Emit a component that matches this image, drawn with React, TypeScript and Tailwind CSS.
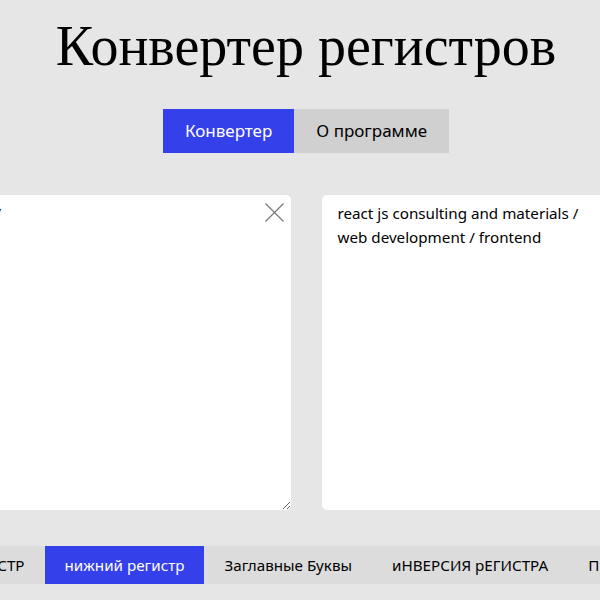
import { useState } from 'react';

const MODES = ['ВЕРХНИЙ РЕГИСТР', 'нижний регистр', 'Заглавные Буквы', 'иНВЕРСИЯ рЕГИСТРА', 'Предложения'];

export default function App() {
  const [tab, setTab] = useState('conv');
  const [mode, setMode] = useState(1);
  const [source, setSource] = useState('React JS Consulting and Materials /\nWeb Development / Frontend');
  const result = 'react js consulting and materials /\nweb development / frontend';

  return (
    <div className="min-h-screen bg-[#e6e6e6] overflow-hidden font-['Noto_Sans',sans-serif] text-black">
      <div className="w-[1000px] ml-[-194px] flex flex-col items-center">
        <h1 className="mt-[14px] text-[56px] leading-[64px] font-['Liberation_Serif',serif] font-normal">
          Конвертер регистров
        </h1>

        {/* Вкладки */}
        <div className="mt-[31px] flex">
          <button
            onClick={() => setTab('conv')}
            className={`h-[44px] px-[22px] text-[17px] ${tab === 'conv' ? 'bg-[#3440e9] text-white' : 'bg-[#d0d0d0] text-black'}`}
          >
            Конвертер
          </button>
          <button
            onClick={() => setTab('about')}
            className={`h-[44px] px-[22px] text-[17px] ${tab === 'about' ? 'bg-[#3440e9] text-white' : 'bg-[#d0d0d0] text-black'}`}
          >
            О программе
          </button>
        </div>

        {/* Поля */}
        <div className="mt-[42px] flex gap-[31px]">
          <div className="relative">
            <textarea
              value={source}
              onChange={e => setSource(e.target.value)}
              className="block w-[553px] h-[315px] bg-white rounded-[5px] px-[16px] py-[6px] text-[15.2px] leading-[24px] outline-none"
            />
            <button onClick={() => setSource('')} className="absolute top-[8px] right-[7px] p-0">
              <svg width="19" height="19" viewBox="0 0 19 19">
                <path d="M0.5 0.5 L18.5 18.5 M18.5 0.5 L0.5 18.5" stroke="#777" strokeWidth="1.2" fill="none" />
              </svg>
            </button>
          </div>
          <textarea
            readOnly
            value={result}
            className="block w-[553px] h-[315px] bg-white rounded-[5px] px-[16px] py-[6px] text-[15.2px] leading-[24px] outline-none"
          />
        </div>
      </div>

      {/* Режимы */}
      <div className="mt-[36px] flex ml-[-134px]">
        {MODES.map((m, i) => (
          <button
            key={m}
            onClick={() => setMode(i)}
            className={`shrink-0 h-[38px] px-[20px] text-[15.2px] whitespace-nowrap ${mode === i ? 'bg-[#3440e9] text-white' : 'bg-[#dcdcdc] text-black'}`}
          >
            {m}
          </button>
        ))}
      </div>
    </div>
  );
}
